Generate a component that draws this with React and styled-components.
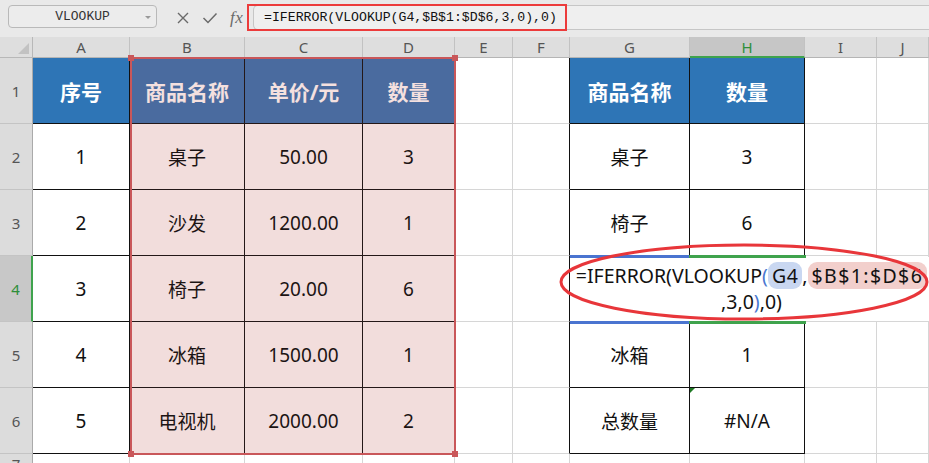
import React from "react";
import styled, { createGlobalStyle, css } from "styled-components";

const GlobalStyle = createGlobalStyle`
  html, body {
    margin: 0;
    padding: 0;
    background: #ffffff;
  }
  body {
    width: 929px;
    height: 463px;
    overflow: hidden;
    font-family: "Noto Sans", "Noto Sans CJK SC", sans-serif;
  }
`;

const COLS = ["A", "B", "C", "D", "E", "F", "G", "H", "I", "J"];
const WIDTHS = [97, 115, 118, 92, 58, 57, 120, 115, 72];

const LEFT = [
  ["序号", "商品名称", "单价/元", "数量"],
  ["1", "桌子", "50.00", "3"],
  ["2", "沙发", "1200.00", "1"],
  ["3", "椅子", "20.00", "6"],
  ["4", "冰箱", "1500.00", "1"],
  ["5", "电视机", "2000.00", "2"],
];

const RIGHT = [
  ["商品名称", "数量"],
  ["桌子", "3"],
  ["椅子", "6"],
  ["", ""],
  ["冰箱", "1"],
  ["总数量", "#N/A"],
];

const KINDS = {
  head: { bg: "#2e75b6", color: "#ffffff", bold: true },
  headSel: { bg: "#4a6b9f", color: "#f4e0df", bold: true },
  sel: { bg: "#f2dddc", color: "#1c1414" },
  plain: { bg: "#ffffff", color: "#111111" },
};

const Page = styled.div`
  width: 929px;
  height: 463px;
  display: flex;
  flex-direction: column;
  background: #ffffff;
`;

const TopBar = styled.div`
  position: relative;
  height: 37px;
  flex: none;
  display: flex;
  align-items: flex-start;
  padding-top: 5px;
  box-sizing: border-box;
  background: #e9e9e9;
`;

const NameBox = styled.div`
  margin-left: 8px;
  width: 149px;
  height: 23px;
  box-sizing: border-box;
  border: 1px solid #b9b9b9;
  border-radius: 4px;
  background: #ececec;
  display: flex;
  align-items: center;
  justify-content: center;
  position: relative;
  font-family: "Liberation Mono", monospace;
  font-size: 13px;
  color: #333;

  &::after {
    content: "";
    position: absolute;
    right: 5px;
    top: 10px;
    border-left: 3px solid transparent;
    border-right: 3px solid transparent;
    border-top: 3px solid #999;
  }
`;

const Tools = styled.div`
  display: flex;
  align-items: center;
  gap: 12px;
  height: 25px;
  margin-left: 19px;
  width: 77px;
`;

const FxLabel = styled.span`
  font-family: "Liberation Serif", serif;
  font-style: italic;
  font-size: 17px;
  color: #6a6a6a;
  letter-spacing: 0.5px;
`;

const FormulaField = styled.div`
  flex: 1;
  height: 25px;
  box-sizing: border-box;
  border: 1px solid #c6c6c6;
  border-right: none;
  border-radius: 5px 0 0 5px;
  background: #efefef;
  display: flex;
  align-items: center;
  padding-left: 10px;
  font-family: "Liberation Mono", monospace;
  font-size: 13.2px;
  color: #111;
  white-space: nowrap;
`;

const Mark = styled.div`
  position: absolute;
  left: 247px;
  top: 4px;
  width: 320px;
  height: 27px;
  box-sizing: border-box;
  border: 2px solid #ec3b3b;
`;

const Sheet = styled.div`
  position: relative;
  flex: 1;
  display: grid;
  grid-template-columns: 33px ${WIDTHS.map((w) => `${w}px`).join(" ")} 1fr;
  grid-template-rows: 21px repeat(6, 66px) 1fr;
  overflow: hidden;
`;

const Corner = styled.div`
  background: #dedede;
  border-right: 1px solid #b8b8b8;
  border-bottom: 1px solid #b8b8b8;
  position: relative;

  &::after {
    content: "";
    position: absolute;
    right: 3px;
    bottom: 3px;
    border-left: 11px solid transparent;
    border-bottom: 11px solid #c2c2c2;
  }
`;

const ColHeader = styled.div`
  display: flex;
  align-items: center;
  justify-content: center;
  font-size: 15px;
  box-sizing: border-box;
  background: ${(p) => (p.$active ? "#c6c6c6" : "#dedede")};
  color: ${(p) => (p.$active ? "#2f8f3a" : "#555")};
  border-right: 1px solid #c2c2c2;
  border-bottom: ${(p) => (p.$active ? "2px solid #3fa34d" : "1px solid #b5b5b5")};
`;

const RowHeader = styled.div`
  display: flex;
  align-items: center;
  justify-content: center;
  font-size: 15px;
  box-sizing: border-box;
  background: ${(p) => (p.$active ? "#c8c8c8" : "#dcdcdc")};
  color: ${(p) => (p.$active ? "#2f8f3a" : "#555")};
  border-right: ${(p) => (p.$active ? "2px solid #3fa34d" : "1px solid #aaaaaa")};
  border-bottom: 1px solid #c4c4c4;
`;

const Cell = styled.div`
  position: relative;
  display: flex;
  align-items: center;
  justify-content: center;
  box-sizing: border-box;
  white-space: nowrap;
  border-right: 1px solid ${(p) => p.$right || "#d6d6d6"};
  border-bottom: 1px solid ${(p) => p.$bottom || "#d6d6d6"};
  background: ${(p) => p.$bg || "#ffffff"};
  color: ${(p) => p.$color || "#111"};
  font-size: ${(p) => (p.$bold ? "21px" : "19px")};
  font-weight: ${(p) => (p.$bold ? 700 : 400)};

  ${(p) =>
    p.$flag &&
    css`
      &::before {
        content: "";
        position: absolute;
        left: 0;
        top: 0;
        border-top: 5px solid #1f7a24;
        border-right: 5px solid transparent;
      }
    `}
`;

const Selection = styled.div`
  position: absolute;
  left: 130px;
  top: 20px;
  width: 326px;
  height: 398px;
  box-sizing: border-box;
  border: 2px solid #c9575a;
  pointer-events: none;
`;

const Handle = styled.span`
  position: absolute;
  width: 6px;
  height: 6px;
  background: ${(p) => p.$color};
  ${(p) => (p.$x === "l" ? "left: -4px;" : "right: -4px;")}
  ${(p) => (p.$y === "t" ? "top: -4px;" : "bottom: -4px;")}
`;

const RefLine = styled.div`
  position: absolute;
  left: ${(p) => p.$left}px;
  top: ${(p) => p.$top}px;
  width: ${(p) => p.$width}px;
  height: 3px;
  background: ${(p) => p.$color};
`;

const Editor = styled.div`
  position: absolute;
  left: 570px;
  top: 220px;
  width: 359px;
  height: 64px;
  box-sizing: border-box;
  padding-top: 6px;
  padding-left: 4px;
  background: #ffffff;
  text-align: center;
  font-size: 19.5px;
  line-height: 26px;
  color: #111;
  white-space: nowrap;
`;

const Paren = styled.span`
  color: #4a78d0;
`;

const Ref = styled.span`
  border-radius: 9px;
  padding: 0 4px;
  background: ${(p) => (p.$tone === "blue" ? "#c9d7f1" : "#f2cfcc")};
  letter-spacing: ${(p) => (p.$tone === "blue" ? "0.5px" : "1.4px")};
`;

const Ellipse = styled.svg`
  position: absolute;
  left: 559px;
  top: 206px;
  overflow: visible;
  pointer-events: none;
`;

function cellStyle(r, c) {
  if (c === 0) {
    return { ...KINDS[r === 0 ? "head" : "plain"], right: "#111", bottom: "#111" };
  }
  if (c >= 1 && c <= 3) {
    return { ...KINDS[r === 0 ? "headSel" : "sel"], right: "#241818", bottom: "#241818" };
  }
  if (c === 5) return { right: "#111" };
  if (c === 6 || c === 7) {
    return { ...KINDS[r === 0 ? "head" : "plain"], right: "#111", bottom: "#111" };
  }
  return {};
}

function cellText(r, c) {
  if (c <= 3) return LEFT[r][c];
  if (c === 6 || c === 7) return RIGHT[r][c - 6];
  return "";
}

const Cross = () => (
  <svg width="14" height="14" viewBox="0 0 14 14">
    <path d="M2 2 L12 12 M12 2 L2 12" stroke="#6a6a6a" strokeWidth="1.4" fill="none" />
  </svg>
);

const Check = () => (
  <svg width="16" height="14" viewBox="0 0 16 14">
    <path d="M1.5 7 L6 11.5 L14.5 2.5" stroke="#6a6a6a" strokeWidth="1.5" fill="none" />
  </svg>
);

export default function App() {
  return (
    <Page>
      <GlobalStyle />
      <TopBar>
        <NameBox>VLOOKUP</NameBox>
        <Tools>
          <Cross />
          <Check />
          <FxLabel>fx</FxLabel>
        </Tools>
        <FormulaField>=IFERROR(VLOOKUP(G4,$B$1:$D$6,3,0),0)</FormulaField>
        <Mark />
      </TopBar>

      <Sheet>
        <Corner />
        {COLS.map((col) => (
          <ColHeader key={col} $active={col === "H"}>
            {col}
          </ColHeader>
        ))}

        {[0, 1, 2, 3, 4, 5, 6].map((r) => (
          <React.Fragment key={r}>
            <RowHeader $active={r === 3}>{r + 1}</RowHeader>
            {COLS.map((col, c) => {
              if (r === 6) return <Cell key={col} />;
              const s = cellStyle(r, c);
              return (
                <Cell
                  key={col}
                  $bg={s.bg}
                  $color={s.color}
                  $bold={s.bold}
                  $right={s.right}
                  $bottom={s.bottom}
                  $flag={r === 5 && c === 7}
                >
                  {cellText(r, c)}
                </Cell>
              );
            })}
          </React.Fragment>
        ))}

        <Selection>
          <Handle $color="#c9575a" $x="l" $y="t" />
          <Handle $color="#c9575a" $x="r" $y="t" />
          <Handle $color="#c9575a" $x="l" $y="b" />
          <Handle $color="#c9575a" $x="r" $y="b" />
        </Selection>

        <Editor>
          =IFERROR(VLOOKUP<Paren>(</Paren>
          <Ref $tone="blue">G4</Ref>,<Ref $tone="red">$B$1:$D$6</Ref>
          <br />
          ,3,0<Paren>)</Paren>,0)
        </Editor>

        <RefLine $left={570} $top={218} $width={119} $color="#4a74d0" />
        <RefLine $left={689} $top={218} $width={117} $color="#3fa34d" />
        <RefLine $left={570} $top={284} $width={119} $color="#4a74d0" />
        <RefLine $left={689} $top={284} $width={117} $color="#3fa34d" />

        <Ellipse width="370" height="78" viewBox="0 0 370 78">
          <ellipse cx="185" cy="39" rx="183" ry="37" fill="none" stroke="#e8363a" strokeWidth="3" />
        </Ellipse>
      </Sheet>
    </Page>
  );
}
